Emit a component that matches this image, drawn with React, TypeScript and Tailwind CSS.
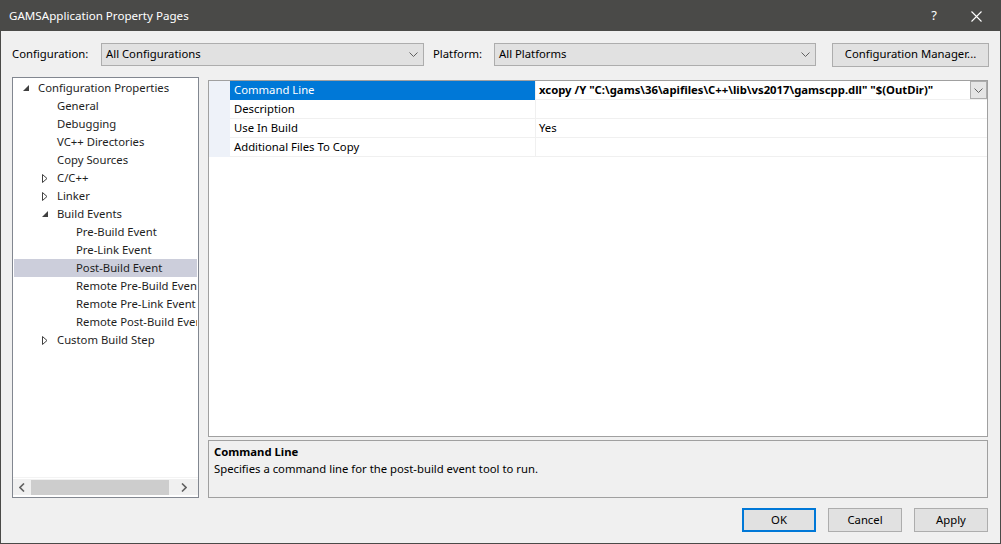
const font = "font-['Noto_Sans','Liberation_Sans',sans-serif]";

type Node = { label: string; level: number; exp?: "open" | "closed"; selected?: boolean };

const tree: Node[] = [
  { label: "Configuration Properties", level: 0, exp: "open" },
  { label: "General", level: 1 },
  { label: "Debugging", level: 1 },
  { label: "VC++ Directories", level: 1 },
  { label: "Copy Sources", level: 1 },
  { label: "C/C++", level: 1, exp: "closed" },
  { label: "Linker", level: 1, exp: "closed" },
  { label: "Build Events", level: 1, exp: "open" },
  { label: "Pre-Build Event", level: 2 },
  { label: "Pre-Link Event", level: 2 },
  { label: "Post-Build Event", level: 2, selected: true },
  { label: "Remote Pre-Build Event", level: 2 },
  { label: "Remote Pre-Link Event", level: 2 },
  { label: "Remote Post-Build Event", level: 2 },
  { label: "Custom Build Step", level: 1, exp: "closed" },
];

const rows = [
  { name: "Command Line", value: 'xcopy /Y "C:\\gams\\36\\apifiles\\C++\\lib\\vs2017\\gamscpp.dll" "$(OutDir)"' },
  { name: "Description", value: "" },
  { name: "Use In Build", value: "Yes" },
  { name: "Additional Files To Copy", value: "" },
];

function Chevron() {
  return (
    <svg width="9" height="5" viewBox="0 0 9 5">
      <path d="M0.5 0.5 L4.5 4.5 L8.5 0.5" fill="none" stroke="#606060" strokeWidth="1" />
    </svg>
  );
}

function Combo({ value, width }: { value: string; width: string }) {
  return (
    <div className={`${width} h-[23px] flex items-center justify-between border border-[#adadad] bg-[#e1e1e1] pl-[4px] pr-[5px]`}>
      <span>{value}</span>
      <Chevron />
    </div>
  );
}

function Expander({ exp }: { exp?: "open" | "closed" }) {
  if (exp === "open")
    return (
      <svg width="7" height="7" viewBox="0 0 7 7">
        <polygon points="6,0 6,6 0,6" fill="#404040" />
      </svg>
    );
  if (exp === "closed")
    return (
      <svg width="6" height="9" viewBox="0 0 6 9">
        <polygon points="0.5,0.5 5,4.5 0.5,8.5" fill="white" stroke="#404040" strokeWidth="1" />
      </svg>
    );
  return null;
}

function Button({ label, primary }: { label: string; primary?: boolean }) {
  return (
    <div
      className={`w-[74px] h-[24px] flex items-center justify-center bg-[#e1e1e1] ${
        primary ? "border-2 border-[#0078d7]" : "border border-[#adadad]"
      }`}
    >
      {label}
    </div>
  );
}

export default function App() {
  return (
    <div className={`${font} text-[11.3px] text-[#000] w-[1001px] h-[544px] flex flex-col border border-[#4a4a48] bg-[#f0f0f0] overflow-hidden`}>
      {/* title bar */}
      <div className="h-[30px] shrink-0 bg-[#4a4a48] flex items-center text-white pl-[8px] text-[11.6px]">
        <span className="flex-1">GAMSApplication Property Pages</span>
        <span className="w-[20px] text-center mr-[27px] text-[13px]">?</span>
        <svg width="11" height="11" viewBox="0 0 11 11" className="mr-[18px]">
          <path d="M0.5 0.5 L10.5 10.5 M10.5 0.5 L0.5 10.5" stroke="white" strokeWidth="1.1" />
        </svg>
      </div>

      {/* configuration row */}
      <div className="flex items-center mt-[12px] pl-[11px] h-[23px]">
        <span className="w-[89px]">Configuration:</span>
        <Combo value="All Configurations" width="w-[323px]" />
        <span className="ml-[9px] w-[61px]">Platform:</span>
        <Combo value="All Platforms" width="w-[322px]" />
        <div className="ml-[16px] w-[157px] h-[24px] flex items-center justify-center border border-[#adadad] bg-[#e1e1e1]">
          Configuration Manager...
        </div>
      </div>

      {/* main */}
      <div className="flex mt-[11px] pl-[11px] pr-[12px] h-[421px]">
        {/* tree */}
        <div className="w-[187px] border border-[#828790] bg-white flex flex-col">
          <div className="flex-1 pt-[1px] px-[1px] overflow-hidden">
            {tree.map((n) => (
              <div
                key={n.label}
                className={`h-[18px] flex items-center whitespace-nowrap overflow-hidden ${n.selected ? "bg-[#cccedb]" : ""}`}
              >
                <div
                  className={`shrink-0 flex items-center justify-center w-[12px] ${
                    n.level === 0 ? "ml-[6px]" : n.level === 1 ? "ml-[25px]" : "ml-[44px]"
                  }`}
                >
                  <Expander exp={n.exp} />
                </div>
                <span className="ml-[6px] text-[#1e1e1e]">{n.label}</span>
              </div>
            ))}
          </div>
          <div className="h-[1px] bg-[#f3f3f3]" />
          <div className="h-[17px] mb-[2px] flex items-center bg-[#f0f0f0] border-t border-white">
            <div className="w-[18px] flex justify-center">
              <svg width="6" height="9" viewBox="0 0 6 9">
                <path d="M5 0.5 L1 4.5 L5 8.5" fill="none" stroke="#606060" strokeWidth="1.6" />
              </svg>
            </div>
            <div className="w-[138px] h-[15px] bg-[#cdcdcd]" />
            <div className="flex-1 flex justify-center">
              <svg width="6" height="9" viewBox="0 0 6 9">
                <path d="M1 0.5 L5 4.5 L1 8.5" fill="none" stroke="#606060" strokeWidth="1.6" />
              </svg>
            </div>
          </div>
        </div>

        {/* right column */}
        <div className="flex-1 ml-[9px] flex flex-col">
          <div className="mt-[3px] h-[357px] border border-[#a0a0a0] bg-white">
            {rows.map((r, i) => (
              <div key={r.name} className="flex h-[19px]">
                <div className="w-[21px] bg-[#eef2f9]" />
                <div
                  className={`w-[305px] pl-[4px] flex items-center border-b ${
                    i === 0 ? "bg-[#0078d7] text-white border-[#0078d7]" : "border-[#f0f0f0]"
                  }`}
                >
                  {r.name}
                </div>
                <div className="flex-1 flex items-center border-l border-b border-[#f0f0f0] pl-[3px]">
                  <span className={`flex-1 ${i === 0 ? "font-bold" : ""}`}>{r.value}</span>
                  {i === 0 && (
                    <div className="w-[17px] h-[18px] border border-[#adadad] bg-[#e5e5e5] flex items-center justify-center">
                      <Chevron />
                    </div>
                  )}
                </div>
              </div>
            ))}
          </div>
          <div className="mt-[3px] h-[58px] border border-[#a0a0a0] bg-[#f0f0f0] px-[5px] pt-[2px] leading-[17px]">
            <div className="font-bold">Command Line</div>
            <div>Specifies a command line for the post-build event tool to run.</div>
          </div>
        </div>
      </div>

      {/* buttons */}
      <div className="flex justify-end gap-[12px] mt-[10px] pr-[12px]">
        <Button label="OK" primary />
        <Button label="Cancel" />
        <Button label="Apply" />
      </div>
    </div>
  );
}
